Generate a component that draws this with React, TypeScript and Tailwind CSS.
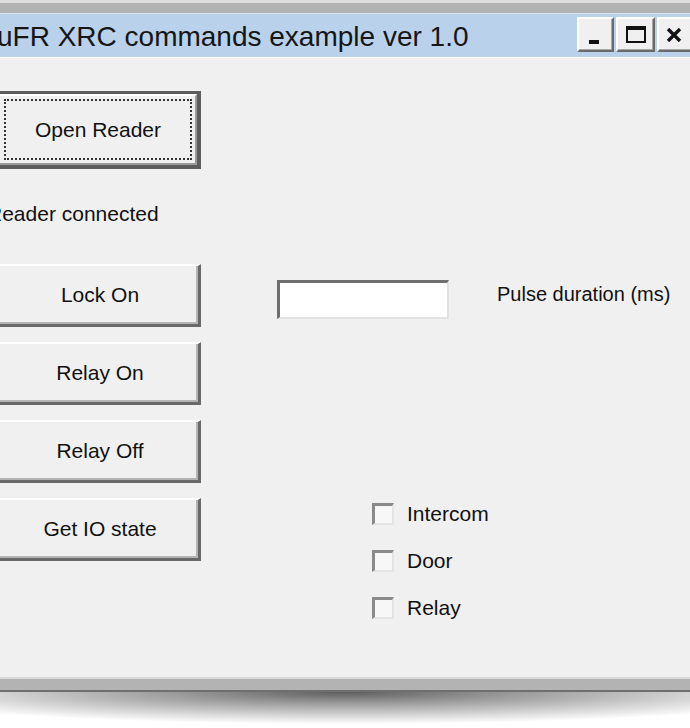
import React from 'react'

// classic win32 dialog, scaled up ~2x and cut at the left/right edges

const font = { fontFamily: '"Liberation Sans", Arial, sans-serif' }

function CaptionButton({ children, w }: { children: React.ReactNode; w: string }) {
  return (
    <div
      className={`${w} h-[35px] flex items-center justify-center bg-[#f0f0f0] border-t-2 border-l-2 border-white border-r-2 border-b-2 border-r-[#6a6a6a] border-b-[#6a6a6a] shadow-[inset_-1px_-1px_0_#a8a8a8]`}
    >
      {children}
    </div>
  )
}

function WinButton({ label, isDefault = false }: { label: string; isDefault?: boolean }) {
  if (isDefault) {
    return (
      <div className="ml-[-6px] w-[207px] h-[78px] border-[3px] border-[#5c5c5c] border-r-4 border-b-4">
        <div className="h-full border-t-2 border-l-2 border-white border-r-2 border-b-2 border-r-[#9a9a9a] border-b-[#9a9a9a] p-[3px] pl-[5px]">
          <div className="h-full border-2 border-dotted border-[#333] flex items-center justify-center text-[21px] text-[#111]">
            {label}
          </div>
        </div>
      </div>
    )
  }
  return (
    <div className="ml-[-6px] w-[207px] h-[63px] border-t-2 border-l-2 border-white border-r-[3px] border-b-[3px] border-r-[#696969] border-b-[#696969] shadow-[inset_-2px_-2px_0_#b4b4b4] flex items-center justify-center text-[21px] text-[#111]">
      <span className="ml-[6px]">{label}</span>
    </div>
  )
}

function CheckRow({ label }: { label: string }) {
  return (
    <div className="flex items-center h-[24px]">
      <div className="w-[22px] h-[22px] bg-[#f7f7f7] border-t-[3px] border-l-[3px] border-[#8a8a8a] border-r-2 border-b-2 border-r-[#e4e4e4] border-b-[#e4e4e4]" />
      <span className="ml-[13px] text-[21px] text-[#111] leading-[24px]">{label}</span>
    </div>
  )
}

export default function App() {
  return (
    <div className="w-[690px] h-[728px] overflow-hidden bg-white flex flex-col" style={font}>
      {/* outer frame top */}
      <div className="h-[3px] bg-[#dedede]" />
      <div className="h-[10px] bg-[#b3b3b3]" />
      <div className="h-[1px] bg-[#d6e3f0]" />

      {/* title bar */}
      <div className="h-[43px] bg-[#b9d1ea] flex items-center">
        <div className="ml-[-3px] mt-[3px] text-[28px] text-[#161616] leading-none whitespace-nowrap flex-1">
          uFR XRC commands example ver 1.0
        </div>
        <div className="flex gap-[2px] mr-[-6px] mt-[-2px]">
          <CaptionButton w="w-[37px]">
            <div className="w-[10px] h-[4px] bg-[#111] mt-[14px] mr-[4px]" />
          </CaptionButton>
          <CaptionButton w="w-[39px]">
            <div className="w-[20px] h-[17px] border-2 border-t-4 border-[#111]" />
          </CaptionButton>
          <CaptionButton w="w-[39px]">
            <svg width="16" height="14" viewBox="0 0 16 14" className="mr-[6px]">
              <path d="M2 1 L14 13 M14 1 L2 13" stroke="#111" strokeWidth="3.4" strokeLinecap="butt" />
            </svg>
          </CaptionButton>
        </div>
      </div>
      <div className="h-[1px] bg-white" />

      {/* client area */}
      <div className="h-[619px] bg-[#f0f0f0] flex flex-col">
        <div className="mt-[33px]">
          <WinButton label="Open Reader" isDefault />
        </div>

        <div className="mt-[33px] ml-[-13px] text-[21px] leading-[24px] text-[#111] whitespace-nowrap">
          Reader connected
        </div>

        <div className="mt-[38px] flex">
          <div className="flex flex-col gap-[15px]">
            <WinButton label="Lock On" />
            <WinButton label="Relay On" />
            <WinButton label="Relay Off" />
            <WinButton label="Get IO state" />
          </div>

          <div className="flex-1 flex flex-col">
            <div className="mt-[16px] flex items-center">
              <div className="ml-[76px] w-[172px] h-[39px] bg-white border-t-[3px] border-l-[3px] border-[#6e6e6e] border-r-2 border-b-2 border-r-[#e2e2e2] border-b-[#e2e2e2]" />
              <span className="ml-[48px] text-[20px] text-[#111] whitespace-nowrap mt-[-12px]">
                Pulse duration (ms)
              </span>
            </div>

            <div className="mt-[183px] ml-[171px] flex flex-col gap-[23px]">
              <CheckRow label="Intercom" />
              <CheckRow label="Door" />
              <CheckRow label="Relay" />
            </div>
          </div>
        </div>
      </div>

      {/* outer frame bottom */}
      <div className="h-[2px] bg-[#dadada]" />
      <div className="h-[11px] bg-[#b3b3b3]" />
      <div className="h-[2px] bg-[#6f6f6f]" />
      <div className="h-[32px] bg-[radial-gradient(ellipse_70%_100%_at_50%_0%,#5e5e5e_0%,#9a9a9a_35%,#ffffff_100%)]" />
      <div className="flex-1 bg-white" />
    </div>
  )
}
